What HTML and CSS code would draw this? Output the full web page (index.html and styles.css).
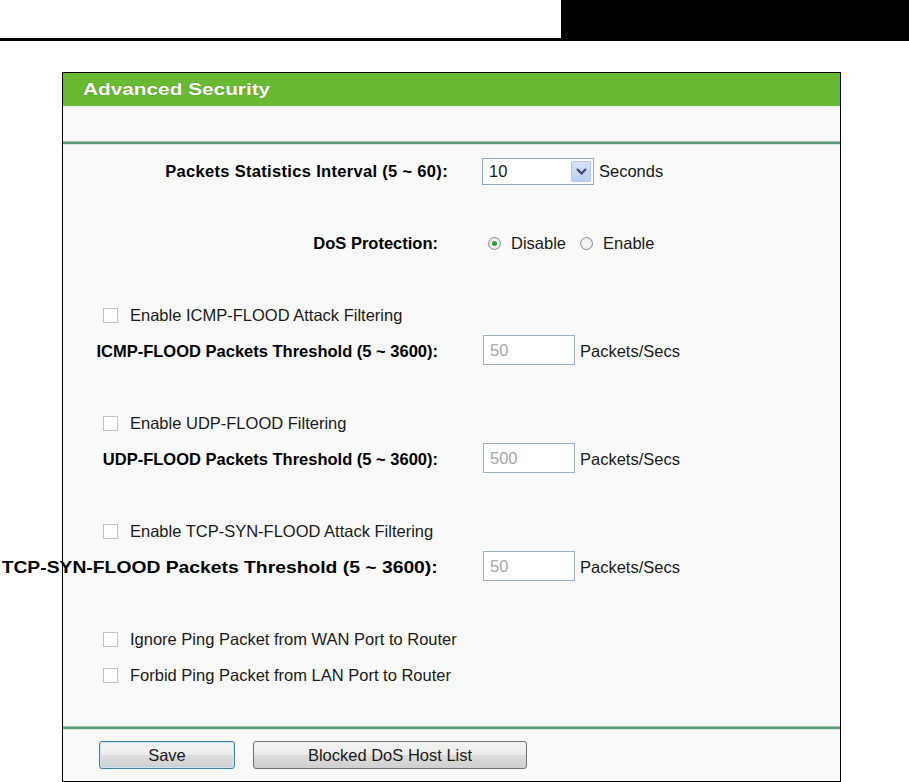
FILE: index.html
```html
<!DOCTYPE html>
<html lang="en">
<head>
<meta charset="utf-8">
<title>Advanced Security</title>
<link rel="stylesheet" href="styles.css">
</head>
<body>
<div class="topbar"><div class="topbar-tab"></div></div>

<div class="panel">
  <div class="panel-head"><span class="panel-title">Advanced Security</span></div>
  <div class="panel-blank"></div>
  <div class="sep"></div>

  <div class="rows">
    <div class="row row-wide">
      <div class="label"><span class="label-text">Packets Statistics Interval (5 ~ 60):</span></div>
      <div class="field">
        <div class="select">
          <span class="select-value">10</span>
          <span class="select-btn">
            <svg width="11" height="7" viewBox="0 0 11 7"><path d="M1 1 L5.5 5.5 L10 1" fill="none" stroke="#3a4a64" stroke-width="2.2"/></svg>
          </span>
        </div>
        <span class="unit">Seconds</span>
      </div>
    </div>
    <div class="row"></div>

    <div class="row">
      <div class="label"><span class="label-text">DoS Protection:</span></div>
      <div class="field radios">
        <span class="radio checked"></span><span class="radio-text">Disable</span>
        <span class="radio"></span><span class="radio-text">Enable</span>
      </div>
    </div>
    <div class="row"></div>

    <div class="row check-row"><span class="checkbox"></span><span>Enable ICMP-FLOOD Attack Filtering</span></div>
    <div class="row">
      <div class="label"><span class="label-text">ICMP-FLOOD Packets Threshold (5 ~ 3600):</span></div>
      <div class="field"><div class="input">50</div><span class="unit">Packets/Secs</span></div>
    </div>
    <div class="row"></div>

    <div class="row check-row"><span class="checkbox"></span><span>Enable UDP-FLOOD Filtering</span></div>
    <div class="row">
      <div class="label"><span class="label-text">UDP-FLOOD Packets Threshold (5 ~ 3600):</span></div>
      <div class="field"><div class="input">500</div><span class="unit">Packets/Secs</span></div>
    </div>
    <div class="row"></div>

    <div class="row check-row"><span class="checkbox"></span><span>Enable TCP-SYN-FLOOD Attack Filtering</span></div>
    <div class="row">
      <div class="label"><span class="label-text label-stretch">TCP-SYN-FLOOD Packets Threshold (5 ~ 3600):</span></div>
      <div class="field"><div class="input">50</div><span class="unit">Packets/Secs</span></div>
    </div>
    <div class="row"></div>

    <div class="row check-row"><span class="checkbox"></span><span>Ignore Ping Packet from WAN Port to Router</span></div>
    <div class="row check-row"><span class="checkbox"></span><span>Forbid Ping Packet from LAN Port to Router</span></div>
  </div>

  <div class="sep sep-bottom"></div>
  <div class="buttons">
    <button class="btn btn-save">Save</button>
    <button class="btn btn-list">Blocked DoS Host List</button>
  </div>
</div>
</body>
</html>
```

FILE: styles.css
```css
html, body {
  margin: 0;
  padding: 0;
  background: #ffffff;
}
body {
  width: 909px;
  height: 782px;
  overflow: hidden;
  font-family: "Liberation Sans", Arial, sans-serif;
  font-size: 16.5px;
  color: #1a1a1a;
}

.topbar {
  height: 38px;
  border-bottom: 3px solid #000;
  display: flex;
  justify-content: flex-end;
}
.topbar-tab {
  width: 348px;
  background: #000;
}

.panel {
  margin: 31px 0 0 62px;
  width: 777px;
  height: 708px;
  border: 1px solid #000;
  background: #f9f9f9;
  display: flex;
  flex-direction: column;
}

.panel-head {
  height: 33px;
  background: #6ab935;
  color: #fff;
  font-weight: bold;
  font-size: 16.5px;
  line-height: 33px;
  padding-left: 20px;
  text-shadow: 0 0 1px rgba(40, 80, 20, 0.5);
  border-bottom: 1px solid #e6f0e0;
}
.panel-title {
  display: inline-block;
  transform: scaleX(1.26);
  transform-origin: left center;
}
.panel-blank {
  height: 34px;
}
.sep {
  height: 2px;
  background: #5e9c7b;
  border-top: 1px solid #9dc4ad;
  border-bottom: 1px solid #d4e6da;
}

.rows {
  padding-top: 8px;
  display: flex;
  flex-direction: column;
}
.row {
  height: 36px;
  display: flex;
  align-items: center;
  white-space: nowrap;
}
.label {
  width: 375px;
  flex: none;
  display: flex;
  justify-content: flex-end;
  font-weight: bold;
  color: #000;
}
.label-text {
  display: inline-block;
}
.label-stretch {
  transform: scaleX(1.17);
  transform-origin: right center;
}
.field {
  margin-left: 45px;
  display: flex;
  align-items: center;
}
.row-wide .label {
  width: 385px;
}
.row-wide .label-text {
  letter-spacing: 0.32px;
}
.row-wide .field {
  margin-left: 34px;
}

.select {
  width: 110px;
  height: 25px;
  border: 1px solid #8ea8c8;
  background: #fff;
  display: flex;
  align-items: center;
  justify-content: space-between;
  box-sizing: content-box;
}
.select-value {
  padding-left: 6px;
}
.select-btn {
  width: 20px;
  height: 21px;
  margin-right: 2px;
  background: linear-gradient(#d6e2fb, #bccef6);
  border: 1px solid #b4c6ec;
  box-sizing: border-box;
  border-radius: 2px;
  display: flex;
  align-items: center;
  justify-content: center;
}
.unit {
  margin-left: 5px;
}

.radios {
  margin-left: 50px;
}
.radio {
  width: 13px;
  height: 13px;
  border: 1px solid #8a8c90;
  border-radius: 50%;
  box-sizing: border-box;
  background: radial-gradient(circle, #f4f4f4 40%, #dcdcdc 100%);
  display: inline-flex;
  align-items: center;
  justify-content: center;
}
.radio.checked::after {
  content: "";
  width: 5px;
  height: 5px;
  border-radius: 50%;
  background: #2fa33a;
}
.radio-text {
  margin: 0 14px 0 10px;
}

.check-row {
  padding-left: 40px;
}
.checkbox {
  width: 15px;
  height: 15px;
  border: 1px solid #c2c2c2;
  background: #fff;
  box-sizing: border-box;
  margin-right: 12px;
  flex: none;
}

.input {
  width: 92px;
  height: 30px;
  box-sizing: border-box;
  border: 1px solid #9ab0cc;
  background: #fff;
  color: #a8a8a8;
  padding-left: 6px;
  line-height: 28px;
  margin-top: -3px;
}
.input + .unit {
  margin-left: 5px;
}

.sep-bottom {
  margin-top: 33px;
}
.buttons {
  padding: 11px 0 0 36px;
  display: flex;
  gap: 18px;
}
.btn {
  height: 28px;
  font-family: "Liberation Sans", Arial, sans-serif;
  font-size: 16.5px;
  color: #1a1a1a;
  border: 1px solid #707070;
  border-radius: 3px;
  background: linear-gradient(#f4f4f4 0%, #ebebeb 48%, #dddddd 52%, #cfcfcf 100%);
  padding: 0;
}
.btn-save {
  width: 136px;
  border-color: #3c7fb1;
  box-shadow: inset 0 0 0 1px #cbe6f7;
}
.btn-list {
  width: 274px;
}
```
